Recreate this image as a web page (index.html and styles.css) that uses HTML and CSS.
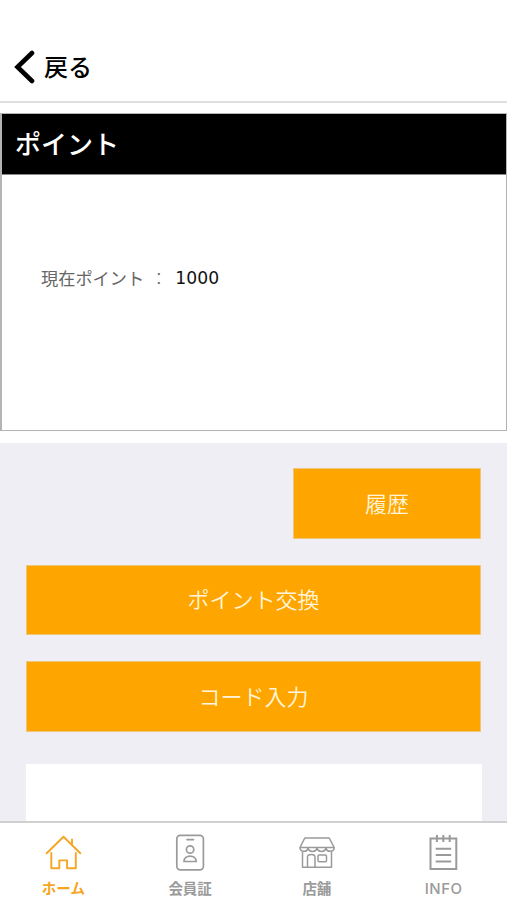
FILE: index.html
```html
<!DOCTYPE html>
<html lang="ja">
<head>
<meta charset="utf-8">
<title>ポイント</title>
<link rel="stylesheet" href="styles.css">
</head>
<body>
<div class="app">
  <header class="header">
    <svg class="chevron" width="21" height="34" viewBox="0 0 21 34" fill="none" stroke="#000" stroke-width="4.6" stroke-linecap="round" stroke-linejoin="miter"><path d="M18 3 3.5 17 18 31"/></svg>
    <span class="back">戻る</span>
  </header>
  <main class="content">
    <section class="card">
      <h1 class="card-title">ポイント</h1>
      <div class="card-body">
        <span class="label">現在ポイント</span><span class="colon">：</span><span class="value">1000</span>
      </div>
    </section>
    <section class="actions">
      <button class="btn btn-small">履歴</button>
      <button class="btn">ポイント交換</button>
      <button class="btn">コード入力</button>
      <div class="panel"></div>
    </section>
  </main>
  <nav class="tabs">
    <a class="tab active">
      <svg width="38" height="38" viewBox="0 0 38 38" fill="none" stroke="currentColor" stroke-width="1.9" stroke-linecap="round" stroke-linejoin="round"><path d="M2.7 19.300 19.500 2.700l16.800 16.600M28 10.800V5.500M7.300 19v15.200h8v-7.800h7.800v7.800h8.700V19"/></svg>
      <span class="tab-text">ホーム</span>
    </a>
    <a class="tab">
      <svg width="38" height="38" viewBox="0 0 38 38" fill="none" stroke="currentColor" stroke-width="1.7" stroke-linecap="round" stroke-linejoin="round"><rect x="5.800" y="1.300" width="26.600" height="34.500" rx="3.500"/><path d="M16 5.700h6.500M13 27.500c0-7.200 12.200-7.200 12.200 0z"/><circle cx="19.100" cy="15.500" r="3.700"/></svg>
      <span class="tab-text">会員証</span>
    </a>
    <a class="tab">
      <svg width="38" height="38" viewBox="0 0 38 38" fill="none" stroke="currentColor" stroke-width="1.5" stroke-linecap="round" stroke-linejoin="round"><path d="M6.800 4h24.400l5 9.500H2zM2 13.500c0 5 7.200 5 8 .5 1 4.500 8 4.500 9 0 1 4.500 8 4.500 9 0 .8 4.500 8.200 4.500 8.200-.5M4.500 17.500v15.800h29V17.500M9.500 33V23c0-3.500 7.500-3.500 7.500 0v10"/><rect x="20" y="21" width="8.500" height="6.800" rx="1.200"/></svg>
      <span class="tab-text">店舗</span>
    </a>
    <a class="tab">
      <svg width="38" height="38" viewBox="0 0 38 38" fill="none" stroke="currentColor" stroke-width="2"><path d="M5.500 4.400h25.800v30.500H5.500zM11.900 1v7M18.300 1v7M24.700 1v7M10.700 14.800h15.500M10.700 21.100h15.500M10.700 27.500h15.500"/></svg>
      <span class="tab-text info">INFO</span>
    </a>
  </nav>
</div>
</body>
</html>
```
FILE: styles.css
```css
* { box-sizing: border-box; }

body {
  margin: 0;
  background: #fff;
  font-family: "Noto Sans CJK JP", sans-serif;
}

.app {
  display: flex;
  flex-direction: column;
  height: 900px;
  overflow: hidden;
}

.header {
  display: flex;
  align-items: center;
  gap: 9px;
  height: 103px;
  padding: 33px 0 0 14px;
  border-bottom: 2px solid #dfdfdf;
}

.back {
  margin-top: -2px;
  font-size: 24px;
  line-height: 34px;
  font-weight: 500;
}

.content {
  flex: 1;
  min-height: 0;
  display: flex;
  flex-direction: column;
  padding-top: 10px;
}

.card {
  flex: none;
  height: 318px;
  border: 1px solid #b4b4b4;
  border-left-width: 2px;
  margin-bottom: 12px;
}

.card-title {
  margin: 0;
  height: 61px;
  padding-left: 13px;
  border-bottom: 1px solid #888;
  background: #000;
  color: #fff;
  font-size: 26px;
  line-height: 57px;
  font-weight: 500;
}

.card-body {
  display: flex;
  align-items: center;
  height: 205px;
  padding-left: 39px;
  font-size: 17.2px;
  color: #666;
}

.colon {
  margin-left: 6px;
  font-weight: 300;
}

.value {
  margin-left: 8px;
  font-family: "DejaVu Sans", sans-serif;
  font-size: 17.2px;
  color: #111;
}

.actions {
  flex: 1;
  min-height: 0;
  display: flex;
  flex-direction: column;
  gap: 26px;
  padding: 25px 26px 0;
  background: #efeef4;
}

.btn {
  flex: none;
  height: 70.5px;
  margin: 0;
  padding: 0 0 3px;
  border: 1px solid #edc57d;
  border-radius: 0;
  background: #ffa500;
  color: #fff5dc;
  font-family: inherit;
  font-size: 22px;
  font-weight: 350;
}

.btn-small {
  align-self: flex-end;
  width: 188px;
}

.panel {
  flex: 1;
  margin: 6px -1px 0 0;
  background: #fff;
}

.tabs {
  display: flex;
  flex: none;
  height: 79px;
  border-top: 2px solid #d0d0d0;
}

.tab {
  flex: 1;
  display: flex;
  flex-direction: column;
  align-items: center;
  padding-top: 11px;
  color: #9a9a9a;
}

.active { color: #f5a623; }

.tab-text {
  margin-top: 6px;
  font-size: 14.5px;
  line-height: 20px;
  font-weight: 700;
}

.info {
  margin-top: 7px;
  font-family: Inter, sans-serif;
  font-size: 15px;
  font-weight: 500;
  letter-spacing: 0.5px;
}
```
